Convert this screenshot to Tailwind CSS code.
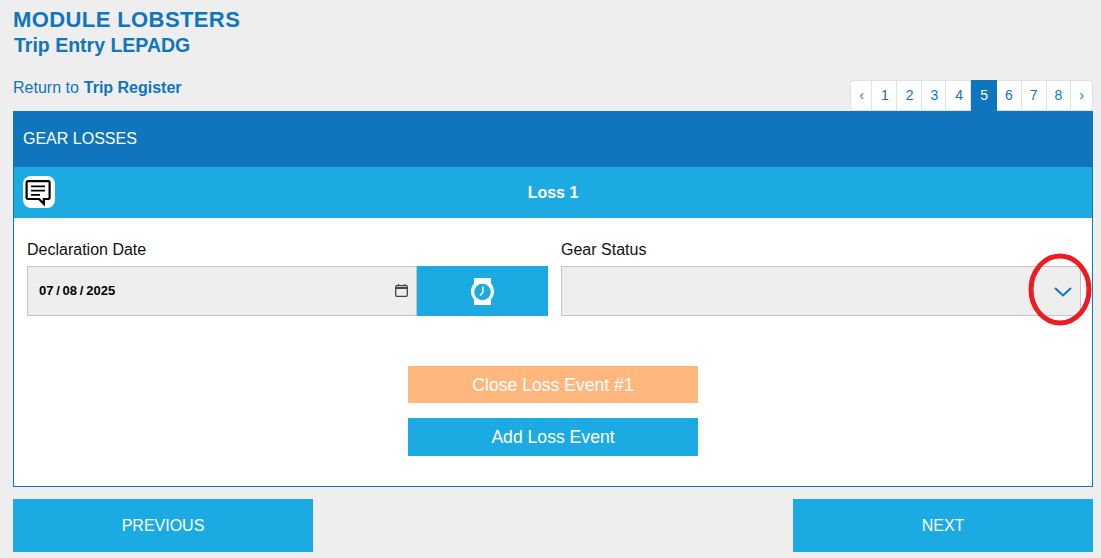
<!DOCTYPE html>
<html lang="en">
<head>
    <meta charset="UTF-8" />
    <title>Trip Entry LEPADG</title>
    <meta name="viewport" content="width=device-width, initial-scale=1" />
    <script src="https://cdn.jsdelivr.net/npm/@tailwindcss/browser@4"></script>
</head>
<body class="relative bg-[#eeeeee] h-[558px] overflow-hidden font-['Liberation_Sans',Arial,sans-serif] text-[#0f75bc]">

    <div class="pl-[13px] pr-[8px]">
        <h1 class="pt-[7px] text-[22px] leading-[25px] font-bold tracking-[0.4px]">MODULE LOBSTERS</h1>
        <h2 class="pl-px text-[19.5px] leading-[26px] font-bold">Trip Entry LEPADG</h2>

        <div class="flex justify-between items-start mt-[11px] h-[42px]">
            <a href="#" class="mt-[10px] text-[16px] leading-[18px]">Return to <b class="ml-[0.5px]">Trip Register</b></a>
            <nav class="flex h-[31px] mt-[11px] bg-white text-[14px] leading-[29px] rounded-[4px] border-y border-l border-[#dee2e6]">
                <a href="#" class="pl-2 pr-[7px] border-r border-[#dee2e6]">‹</a>
                <a href="#" class="pl-[9px] pr-[7px] border-r border-[#dee2e6]">1</a>
                <a href="#" class="pl-[9px] pr-[7px] border-r border-[#dee2e6]">2</a>
                <a href="#" class="pl-[9px] pr-[7px] border-r border-[#dee2e6]">3</a>
                <a href="#" class="pl-[9px] pr-[7px] border-r border-[#dee2e6]">4</a>
                <a href="#" class="px-[9px] -my-px leading-[31px] bg-[#0f75bc] text-white">5</a>
                <a href="#" class="px-2 border-r border-[#dee2e6]">6</a>
                <a href="#" class="px-2 border-r border-[#dee2e6]">7</a>
                <a href="#" class="px-2 border-r border-[#dee2e6]">8</a>
                <a href="#" class="px-2 border-r border-[#dee2e6] rounded-r-[4px]">›</a>
            </nav>
        </div>

        <section class="h-[376px] bg-white border border-[#0f75bc]">
            <div class="h-[55px] bg-[#0f75bc] pl-[9px] text-white text-[16px] leading-[54px]">GEAR LOSSES</div>

            <div class="relative h-[51px] bg-[#1caae2] text-white text-[16px] font-bold text-center leading-[51px]">
                Loss 1
                <span class="absolute left-[9px] top-[9px] w-[32px] h-[32px] bg-white rounded-[8px]">
                    <svg width="32" height="32" viewBox="0 0 32 32" fill="none" stroke="#000" stroke-width="2.200">
                        <path d="M5 5.100h20.200a1.400 1.400 0 0 1 1.400 1.400v15.100a1.400 1.400 0 0 1-1.400 1.400h-4.400v4.800l-4.800-4.800H5a1.400 1.400 0 0 1-1.400-1.400V6.500A1.400 1.400 0 0 1 5 5.100z"/>
                        <path d="M8 10.300h14M8 14.600h14M8 18.900h9" stroke-width="1.800"/>
                    </svg>
                </span>
            </div>

            <div class="flex gap-[13px] pl-[13px] pr-[11px] pt-[22px]">
                <div class="w-[521px]">
                    <label class="block text-[16px] leading-[20px] text-[#111111]">Declaration Date</label>
                    <div class="flex mt-[6px] h-[50px]">
                        <div class="relative flex-1 min-w-0">
                            <input type="date" value="2025-07-08" class="w-full h-full pl-[10px] pr-[8px] bg-[#eeeeee] border border-[#c4c4c4] text-black text-[13px] font-bold font-['Liberation_Sans',Arial,sans-serif] [&::-webkit-datetime-edit-text]:px-[1.750px] [&::-webkit-calendar-picker-indicator]:opacity-0" />
                            <svg class="absolute right-[9px] top-[18px] pointer-events-none" width="13" height="13" viewBox="0 0 13 13" fill="none" stroke="#444444" stroke-width="1.300">
                                <rect x="0.700" y="1.700" width="11.600" height="10.600" rx="1"/>
                                <path d="M0.700 4h11.600" stroke-width="2"/>
                                <path d="M3.500 0v2M9.500 0v2"/>
                            </svg>
                        </div>
                        <button class="w-[131px] bg-[#1caae2] flex items-center justify-center">
                            <svg width="23" height="27" viewBox="0 0 23 27">
                                <path d="M3 0h17v27H3z" fill="#fff"/>
                                <circle cx="11.500" cy="13.500" r="11.500" fill="#fff"/>
                                <circle cx="11.500" cy="14" r="8.300" fill="#1caae2"/>
                                <path d="M11.800 8.500v6l-2.800 3" fill="none" stroke="#fff" stroke-width="1.500"/>
                            </svg>
                        </button>
                    </div>
                </div>
                <div class="flex-1">
                    <label class="block text-[16px] leading-[20px] text-[#111111]">Gear Status</label>
                    <div class="flex items-center justify-end mt-[6px] h-[50px] bg-[#eeeeee] border border-[#c4c4c4] pr-[8px]">
                        <svg class="mt-[2px]" width="18" height="10" viewBox="0 0 18 10" fill="none" stroke="#0f75bc" stroke-width="2"><path d="M1 1l8 7.500L17 1"/></svg>
                    </div>
                </div>
            </div>

            <div class="w-[290px] mx-auto mt-[50px] text-white text-[17.600px] text-center">
                <button class="block w-full h-[37px] pt-px bg-[#ffb77d]">Close Loss Event #1</button>
                <button class="block w-full h-[38px] mt-[15px] bg-[#1caae2]">Add Loss Event</button>
            </div>
        </section>

        <div class="flex justify-between mt-[12px] text-white text-[16px]">
            <button class="w-[300px] h-[53px] bg-[#1caae2]">PREVIOUS</button>
            <button class="w-[300px] h-[53px] bg-[#1caae2]">NEXT</button>
        </div>
    </div>

    <!-- red ring drawn over the dropdown arrow -->
    <svg class="absolute left-[1028px] top-[253px]" width="64" height="73" viewBox="0 0 64 73" fill="none">
        <ellipse cx="32" cy="36.500" rx="29" ry="33.500" stroke="#ed1c24" stroke-width="5"/>
    </svg>
</body>
</html>
